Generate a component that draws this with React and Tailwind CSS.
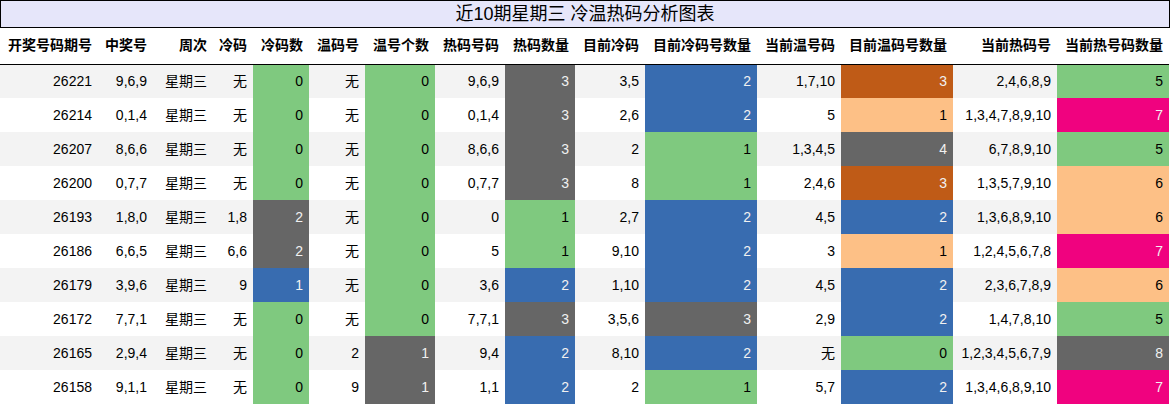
const columns = [
  { label: "开奖号码期号", w: "w-[98px]" },
  { label: "中奖号", w: "w-[55px]" },
  { label: "周次", w: "w-[60px]" },
  { label: "冷码", w: "w-[40px]" },
  { label: "冷码数", w: "w-[56px]" },
  { label: "温码号", w: "w-[56px]" },
  { label: "温号个数", w: "w-[70px]" },
  { label: "热码号码", w: "w-[70px]" },
  { label: "热码数量", w: "w-[70px]" },
  { label: "目前冷码", w: "w-[70px]" },
  { label: "目前冷码号数量", w: "w-[112px]" },
  { label: "当前温号码", w: "w-[84px]" },
  { label: "目前温码号数量", w: "w-[112px]" },
  { label: "当前热码号", w: "w-[104px]" },
  { label: "当前热号码数量", w: "w-[112px]" },
];

// colour codes: g green, k gray, b blue, o brown, l light orange, m magenta
const swatch = {
  g: "bg-[#7fc97f] text-black",
  k: "bg-[#666666] text-[#f1f1f1]",
  b: "bg-[#386cb0] text-[#f1f1f1]",
  o: "bg-[#bf5b17] text-[#f1f1f1]",
  l: "bg-[#fdc086] text-black",
  m: "bg-[#f0027f] text-[#f1f1f1]",
};

const rows = [
  ["26221", "9,6,9", "无", "0g", "无", "0g", "9,6,9", "3k", "3,5", "2b", "1,7,10", "3o", "2,4,6,8,9", "5g"],
  ["26214", "0,1,4", "无", "0g", "无", "0g", "0,1,4", "3k", "2,6", "2b", "5", "1l", "1,3,4,7,8,9,10", "7m"],
  ["26207", "8,6,6", "无", "0g", "无", "0g", "8,6,6", "3k", "2", "1g", "1,3,4,5", "4k", "6,7,8,9,10", "5g"],
  ["26200", "0,7,7", "无", "0g", "无", "0g", "0,7,7", "3k", "8", "1g", "2,4,6", "3o", "1,3,5,7,9,10", "6l"],
  ["26193", "1,8,0", "1,8", "2k", "无", "0g", "0", "1g", "2,7", "2b", "4,5", "2b", "1,3,6,8,9,10", "6l"],
  ["26186", "6,6,5", "6,6", "2k", "无", "0g", "5", "1g", "9,10", "2b", "3", "1l", "1,2,4,5,6,7,8", "7m"],
  ["26179", "3,9,6", "9", "1b", "无", "0g", "3,6", "2b", "1,10", "2b", "4,5", "2b", "2,3,6,7,8,9", "6l"],
  ["26172", "7,7,1", "无", "0g", "无", "0g", "7,7,1", "3k", "3,5,6", "3k", "2,9", "2b", "1,4,7,8,10", "5g"],
  ["26165", "2,9,4", "无", "0g", "2", "1k", "9,4", "2b", "8,10", "2b", "无", "0g", "1,2,3,4,5,6,7,9", "8k"],
  ["26158", "9,1,1", "无", "0g", "9", "1k", "1,1", "2b", "2", "1g", "5,7", "2b", "1,3,4,6,8,9,10", "7m"],
];

// columns 4,6,8,10,12,14 (0-based, after inserting 周次) are coloured counts
const countCols = [4, 6, 8, 10, 12, 14];

const App = () => {
  return (
    <div className="w-[1170px] h-[405px] bg-white overflow-hidden font-['Liberation_Sans','Noto_Sans_CJK_SC',sans-serif] text-black">
      <div className="h-[28px] w-[1170px] border border-black bg-[#e6e6fa] flex items-center justify-center text-[18px] leading-none">
        近10期星期三 冷温热码分析图表
      </div>
      <table className="table-fixed border-collapse w-[1169px] text-[14px]">
        <colgroup>
          {columns.map((c) => (
            <col key={c.label} className={c.w} />
          ))}
        </colgroup>
        <thead>
          <tr className="h-[36px] border-b border-black">
            {columns.map((c) => (
              <th key={c.label} className="text-right font-bold pr-[6px] p-0 whitespace-nowrap">
                {c.label}
              </th>
            ))}
          </tr>
        </thead>
        <tbody>
          {rows.map((r, i) => {
            const cells = [r[0], r[1], "星期三", ...r.slice(2)];
            return (
              <tr key={r[0]} className={`h-[34px] ${i % 2 === 0 ? "bg-[#f3f3f3]" : "bg-white"}`}>
                {cells.map((v, j) => {
                  const isCount = countCols.includes(j);
                  const value = isCount ? v.slice(0, -1) : v;
                  const tone = isCount ? swatch[v.slice(-1)] : "";
                  return (
                    <td key={j} className={`text-right pr-[6px] p-0 whitespace-nowrap ${tone}`}>
                      {value}
                    </td>
                  );
                })}
              </tr>
            );
          })}
        </tbody>
      </table>
    </div>
  );
};

export default App;
